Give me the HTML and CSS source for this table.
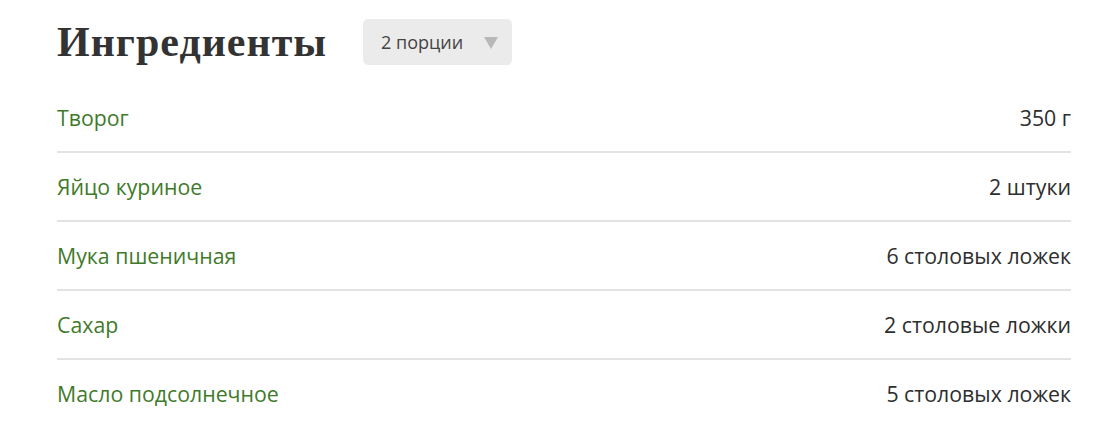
FILE: index.html
```html
<!DOCTYPE html>
<html lang="ru">
<head>
<meta charset="utf-8">
<link rel="stylesheet" href="styles.css">
</head>
<body>
<section class="ingredients">
  <header class="head">
    <h2 class="title">Ингредиенты</h2>
    <div class="portions">
      <span class="portions-label">2 порции</span>
      <svg class="caret" width="14" height="12" viewBox="0 0 14 12"><path d="M0 0H14L7 12Z" fill="#b8b8b8"/></svg>
    </div>
  </header>
  <ul class="list">
    <li class="row"><span class="name">Творог</span><span class="amount">350 г</span></li>
    <li class="row"><span class="name">Яйцо куриное</span><span class="amount">2 штуки</span></li>
    <li class="row"><span class="name">Мука пшеничная</span><span class="amount">6 столовых ложек</span></li>
    <li class="row"><span class="name">Сахар</span><span class="amount">2 столовые ложки</span></li>
    <li class="row"><span class="name">Масло подсолнечное</span><span class="amount">5 столовых ложек</span></li>
  </ul>
</section>
</body>
</html>
```
FILE: styles.css
```css
html, body {
  margin: 0;
  padding: 0;
  background: #ffffff;
}
body {
  font-family: "Open Sans", "Noto Sans", sans-serif;
}
.ingredients {
  width: 1014px;
  margin-left: 57px;
}
.head {
  display: flex;
  align-items: center;
  height: 84px;
}
.title {
  margin: 0 36px 0 0;
  font-family: "Liberation Serif", "DejaVu Serif", serif;
  font-weight: bold;
  font-size: 42px;
  letter-spacing: 1px;
  color: #333333;
  line-height: 1;
}
.portions {
  display: flex;
  align-items: center;
  justify-content: space-between;
  width: 149px;
  height: 46px;
  box-sizing: border-box;
  padding: 0 14px 0 18px;
  background: #ebebeb;
  border-radius: 5px;
}
.portions-label {
  font-size: 18px;
  color: #444444;
}
.caret {
  display: block;
  margin-top: 1px;
}
.list {
  list-style: none;
  margin: 0;
  padding: 0;
}
.row {
  display: flex;
  justify-content: space-between;
  align-items: center;
  height: 67px;
  border-bottom: 2px solid #e3e3e3;
  font-size: 21.3px;
}
.row:last-child {
  border-bottom: none;
}
.name {
  color: #3f7a2a;
}
.amount {
  color: #2e2e2e;
}
```
